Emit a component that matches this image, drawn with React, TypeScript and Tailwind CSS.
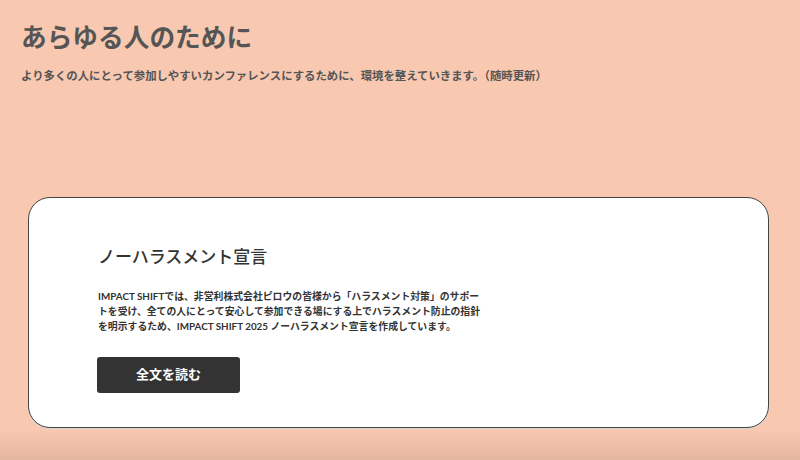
const FONT = { fontFamily: 'Lato, "Noto Sans CJK JP", sans-serif' };

export default function App() {
  return (
    <div
      className="relative flex h-[460px] w-[800px] flex-col overflow-hidden bg-[#f8c8b0] text-[#333]"
      style={FONT}
    >
      <div className="absolute inset-x-0 bottom-0 h-[30px] bg-gradient-to-b from-[#f8c8b0] to-[#e5b6a0]" />

      <header className="relative px-[21px] pt-[20px]">
        <h1 className="text-[25.7px] font-bold leading-[34px] text-[#555]">あらゆる人のために</h1>
        <p className="mt-[14px] text-[11.4px] font-bold leading-[16px] text-[#555]">
          より多くの人にとって参加しやすいカンファレンスにするために、環境を整えていきます。（随時更新）
        </p>
      </header>

      <section className="relative ml-[28px] mr-[31px] mt-[113px] h-[231px] rounded-[22px] border border-[#444] bg-white px-[69px] pt-[46px] shadow-[0_1px_0_#d8d8d8]">
        <h2 className="text-[17px] font-medium leading-[26px] text-[#333]">ノーハラスメント宣言</h2>
        <p className="mt-[19px] w-[387px] text-[9.85px] font-bold leading-[15px] text-[#333]">
          IMPACT SHIFTでは、非営利株式会社ピロウの皆様から「ハラスメント対策」のサポートを受け、全ての人にとって安心して参加できる場にする上でハラスメント防止の指針を明示するため、IMPACT SHIFT 2025 ノーハラスメント宣言を作成しています。
        </p>
        <button
          type="button"
          className="mt-[23px] -ml-[1px] flex h-[36px] w-[143px] items-center justify-center rounded-[3px] bg-[#333] text-[13px] font-bold text-white"
        >
          全文を読む
        </button>
      </section>
    </div>
  );
}
